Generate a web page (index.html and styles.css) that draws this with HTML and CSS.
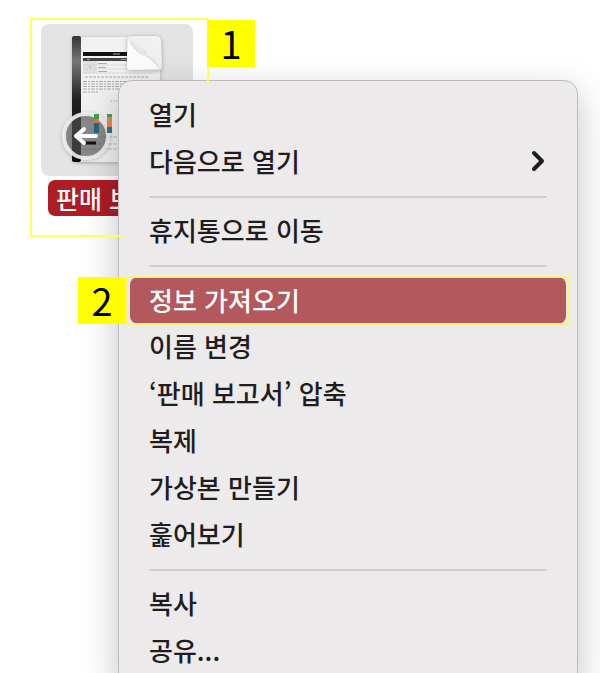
FILE: index.html
```
<!DOCTYPE html>
<html lang="ko">
<head>
  <meta charset="UTF-8" />
  <meta name="viewport" content="width=device-width, initial-scale=1.0"/>
  <title>정보 가져오기</title>
  <link rel="stylesheet" href="styles.css">
</head>
<body>
  <main class="desktop">
    <div class="file">
      <div class="file-thumb">
        <svg class="file-icon" viewBox="0 0 152 152" aria-hidden="true">
          <defs>
            <linearGradient id="spine" x1="0" y1="0" x2="0" y2="1">
              <stop offset="0" stop-color="#343434"/>
              <stop offset=".2" stop-color="#777"/>
              <stop offset=".5" stop-color="#222"/>
              <stop offset="1" stop-color="#080808"/>
            </linearGradient>
            <linearGradient id="curl" x1="1" y1="0" x2="0" y2="1">
              <stop offset="0" stop-color="#f4f4f4"/>
              <stop offset=".5" stop-color="#eee"/>
              <stop offset=".55" stop-color="#e0e0e0"/>
              <stop offset="1" stop-color="#fff"/>
            </linearGradient>
            <filter id="shade" x="-20%" y="-20%" width="140%" height="140%">
              <feDropShadow dx="0" dy="1" stdDeviation="2" flood-opacity=".25"/>
            </filter>
          </defs>
          <!-- page and spine -->
          <rect x="32" y="13" width="87" height="125" rx="2" fill="#f1f1f1" filter="url(#shade)"/>
          <rect x="31" y="12" width="9" height="126" rx="2" fill="url(#spine)"/>
          <!-- table -->
          <rect x="42" y="28" width="71" height="4" fill="#111"/>
          <path d="M72 30h7" stroke="#aaa"/>
          <rect x="42" y="34" width="71" height="3" fill="#444"/>
          <path d="M46 35.500h3M80 35.500h6" stroke="#999"/>
          <rect x="42" y="37" width="14" height="12" fill="#e0e0e0"/>
          <path d="M42 41h70M42 45h70M42 49h70" stroke="#ccc" stroke-width=".6"/>
          <path d="M57 39.500h9M57 43.500h8M57 47.500h9M48 43h2" stroke="#999" stroke-width=".8"/>
          <path d="M44 53h64" stroke="#aaa" stroke-dasharray="3 1"/>
          <path d="M42 57.500h66M42 60h66M42 62.500h66M42 65h66M42 68h16" stroke="#aaa" stroke-dasharray="4 1 2 1"/>
          <path d="M69 77h14" stroke="#bbb" stroke-dasharray="2 1"/>
          <path d="M42 113h60M42 120h60M42 125h60" stroke="#bbb" stroke-dasharray="4 1"/>
          <!-- folded corner -->
          <path d="M90 12h25q4 0 5 4l1 26q0 4-4 4H90q-4 0-4-4V16q0-4 4-4z" fill="url(#curl)" filter="url(#shade)"/>
          <path d="M87 13L119 45Q112 31 104 31L106 27Q97 26 87 13z" fill="#d5d5d5" opacity=".6"/>
          <path d="M87 14Q91 27 103 32Q111 35 118 45H90q-4 0-4-4z" fill="#fcfcfc"/>
          <!-- alias badge -->
          <circle cx="45" cy="112" r="22" fill="#555" fill-opacity=".6" stroke="#eee" stroke-opacity=".9" stroke-width="4" filter="url(#shade)"/>
          <!-- chart -->
          <g opacity=".85">
            <path d="M53 90h5v5h-5zM66 90h5v3h-5z" fill="#299437"/>
            <path d="M53 95h5v4h-5zM66 93h5v10h-5z" fill="#e97637"/>
            <path d="M53 99h5v10h-5zM66 103h5v6h-5z" fill="#176080"/>
          </g>
          <path d="M44 119h11" stroke="#111" stroke-width="3"/>
          <path d="M55 112H35M43 105L35 112L43 119" fill="none" stroke="#fff" stroke-width="4" stroke-linecap="round" stroke-linejoin="round"/>
        </svg>
      </div>
      <div class="file-name">판매 보고서</div>
    </div>

    <div class="menu">
      <button type="button" class="item">열기</button>
      <button type="button" class="item">
        다음으로 열기
        <svg class="chevron" viewBox="0 0 16 22" aria-hidden="true"><path d="M3 3L11 11L3 19"/></svg>
      </button>
      <hr class="divider">
      <button type="button" class="item">휴지통으로 이동</button>
      <hr class="divider">
      <div class="callout-row">
        <button type="button" class="item selected">정보 가져오기</button>
        <span class="frame"></span>
        <span class="tag tag-left">2</span>
      </div>
      <button type="button" class="item">이름 변경</button>
      <button type="button" class="item">‘판매 보고서’ 압축</button>
      <button type="button" class="item">복제</button>
      <button type="button" class="item">가상본 만들기</button>
      <button type="button" class="item">훑어보기</button>
      <hr class="divider">
      <button type="button" class="item">복사</button>
      <button type="button" class="item">공유...</button>
    </div>

    <div class="file-callout">
      <span class="tag tag-right">1</span>
    </div>
  </main>
</body>
</html>
```
FILE: styles.css
```
* {
  box-sizing: border-box;
}
body {
  margin: 0;
  background-color: #fff;
  color: #1f1d1e;
  font-family: "Noto Sans CJK KR", "Noto Sans", sans-serif;
  font-size: 26px;
}
.desktop {
  position: relative;
  height: 100vh;
  padding: 24px 41px;
  overflow: hidden;
}

/* file on the desktop */
.file {
  display: flex;
  flex-direction: column;
  align-items: center;
  gap: 4px;
  width: 152px;
}
.file-thumb {
  width: 152px;
  height: 152px;
  border-radius: 8px;
  background-color: #e4e4e4;
}
.file-icon {
  display: block;
  width: 100%;
}
.file-name {
  padding: 0 8px;
  border-radius: 7px;
  background-color: #ae1c24;
  color: #fff;
  font-size: 25px;
  font-weight: 500;
  line-height: 36px;
  white-space: nowrap;
}

/* context menu */
.menu {
  position: absolute;
  top: 80px;
  left: 118px;
  right: 22px;
  padding: 11px;
  border: 1px solid #bdbbbc;
  border-radius: 14px;
  background-color: #eceaeb;
  box-shadow: 0 12px 36px rgba(0, 0, 0, 0.24);
}
.item {
  display: flex;
  align-items: center;
  justify-content: space-between;
  width: 100%;
  height: 47px;
  padding: 0 19px 3px;
  border: none;
  border-radius: 8px;
  background: none;
  color: inherit;
  font: inherit;
  font-weight: 500;
  line-height: 44px;
  text-align: left;
}
.item.selected {
  padding-bottom: 1px;
  background-color: #b3585d;
  color: #fff;
}
.chevron {
  width: 16px;
  height: 22px;
}
.chevron path {
  fill: none;
  stroke: #1f1d1e;
  stroke-width: 4;
  stroke-linecap: round;
  stroke-linejoin: round;
}
.divider {
  height: 2px;
  margin: 10px 19px;
  border: none;
  background-color: #d0cecf;
}

/* numbered callouts */
.callout-row {
  position: relative;
}
.frame {
  position: absolute;
  inset: -1px -4px;
  border: 2px solid #f8f57c;
  pointer-events: none;
}
.file-callout {
  position: absolute;
  top: 18px;
  left: 30px;
  width: 179px;
  height: 219px;
  border: 2px solid #ffff5a;
  clip-path: polygon(0 0, 230px 0, 230px 66px, 94px 66px, 94px 100%, 0 100%);
  pointer-events: none;
}
.tag {
  position: absolute;
  top: 0;
  width: 48px;
  height: 47px;
  background-color: #ff0;
  color: #000;
  font-size: 38px;
  font-weight: 400;
  line-height: 46px;
  text-align: center;
}
.tag-left {
  right: 100%;
  margin-right: 4px;
}
.tag-right {
  left: 100%;
}
```
